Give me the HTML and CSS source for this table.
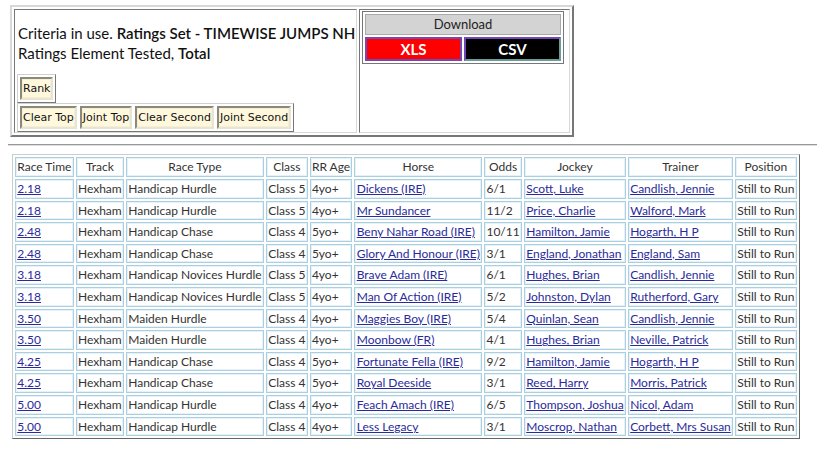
FILE: index.html
```html
<!DOCTYPE html>
<html>
<head>
<meta charset="utf-8">
<link rel="stylesheet" href="styles.css">
</head>
<body>
<div class="top">
  <table class="criteria">
    <tr>
      <td class="crit-left">
        <div class="crit-text">Criteria in use. <b>Ratings Set - TIMEWISE JUMPS NH</b><br>Ratings Element Tested, <b>Total</b></div>
        <div class="rank-box"><span class="btn">Rank</span></div>
        <div class="btn-bar"><span class="btn">Clear Top</span><span class="btn">Joint Top</span><span class="btn">Clear Second</span><span class="btn">Joint Second</span></div>
      </td>
      <td class="crit-right">
        <table class="download">
          <tr><td colspan="2" class="dl-head">Download</td></tr>
          <tr><td class="dl-xls">XLS</td><td class="dl-csv">CSV</td></tr>
        </table>
      </td>
    </tr>
  </table>
</div>
<hr class="rule">
<table class="races">
  <thead>
    <tr><th>Race Time</th><th>Track</th><th>Race Type</th><th>Class</th><th>RR Age</th><th>Horse</th><th>Odds</th><th>Jockey</th><th>Trainer</th><th>Position</th></tr>
  </thead>
  <tbody>
    <tr><td><a href="#">2.18</a></td><td>Hexham</td><td>Handicap Hurdle</td><td>Class 5</td><td>4yo+</td><td><a href="#">Dickens (IRE)</a></td><td>6/1</td><td><a href="#">Scott, Luke</a></td><td><a href="#">Candlish, Jennie</a></td><td>Still to Run</td></tr>
    <tr><td><a href="#">2.18</a></td><td>Hexham</td><td>Handicap Hurdle</td><td>Class 5</td><td>4yo+</td><td><a href="#">Mr Sundancer</a></td><td>11/2</td><td><a href="#">Price, Charlie</a></td><td><a href="#">Walford, Mark</a></td><td>Still to Run</td></tr>
    <tr><td><a href="#">2.48</a></td><td>Hexham</td><td>Handicap Chase</td><td>Class 4</td><td>5yo+</td><td><a href="#">Beny Nahar Road (IRE)</a></td><td>10/11</td><td><a href="#">Hamilton, Jamie</a></td><td><a href="#">Hogarth, H P</a></td><td>Still to Run</td></tr>
    <tr><td><a href="#">2.48</a></td><td>Hexham</td><td>Handicap Chase</td><td>Class 4</td><td>5yo+</td><td><a href="#">Glory And Honour (IRE)</a></td><td>3/1</td><td><a href="#">England, Jonathan</a></td><td><a href="#">England, Sam</a></td><td>Still to Run</td></tr>
    <tr><td><a href="#">3.18</a></td><td>Hexham</td><td>Handicap Novices Hurdle</td><td>Class 5</td><td>4yo+</td><td><a href="#">Brave Adam (IRE)</a></td><td>6/1</td><td><a href="#">Hughes, Brian</a></td><td><a href="#">Candlish, Jennie</a></td><td>Still to Run</td></tr>
    <tr><td><a href="#">3.18</a></td><td>Hexham</td><td>Handicap Novices Hurdle</td><td>Class 5</td><td>4yo+</td><td><a href="#">Man Of Action (IRE)</a></td><td>5/2</td><td><a href="#">Johnston, Dylan</a></td><td><a href="#">Rutherford, Gary</a></td><td>Still to Run</td></tr>
    <tr><td><a href="#">3.50</a></td><td>Hexham</td><td>Maiden Hurdle</td><td>Class 4</td><td>4yo+</td><td><a href="#">Maggies Boy (IRE)</a></td><td>5/4</td><td><a href="#">Quinlan, Sean</a></td><td><a href="#">Candlish, Jennie</a></td><td>Still to Run</td></tr>
    <tr><td><a href="#">3.50</a></td><td>Hexham</td><td>Maiden Hurdle</td><td>Class 4</td><td>4yo+</td><td><a href="#">Moonbow (FR)</a></td><td>4/1</td><td><a href="#">Hughes, Brian</a></td><td><a href="#">Neville, Patrick</a></td><td>Still to Run</td></tr>
    <tr><td><a href="#">4.25</a></td><td>Hexham</td><td>Handicap Chase</td><td>Class 4</td><td>5yo+</td><td><a href="#">Fortunate Fella (IRE)</a></td><td>9/2</td><td><a href="#">Hamilton, Jamie</a></td><td><a href="#">Hogarth, H P</a></td><td>Still to Run</td></tr>
    <tr><td><a href="#">4.25</a></td><td>Hexham</td><td>Handicap Chase</td><td>Class 4</td><td>5yo+</td><td><a href="#">Royal Deeside</a></td><td>3/1</td><td><a href="#">Reed, Harry</a></td><td><a href="#">Morris, Patrick</a></td><td>Still to Run</td></tr>
    <tr><td><a href="#">5.00</a></td><td>Hexham</td><td>Handicap Hurdle</td><td>Class 4</td><td>4yo+</td><td><a href="#">Feach Amach (IRE)</a></td><td>6/5</td><td><a href="#">Thompson, Joshua</a></td><td><a href="#">Nicol, Adam</a></td><td>Still to Run</td></tr>
    <tr><td><a href="#">5.00</a></td><td>Hexham</td><td>Handicap Hurdle</td><td>Class 4</td><td>4yo+</td><td><a href="#">Less Legacy</a></td><td>3/1</td><td><a href="#">Moscrop, Nathan</a></td><td><a href="#">Corbett, Mrs Susan</a></td><td>Still to Run</td></tr>
  </tbody>
</table>
</body>
</html>
```
FILE: styles.css
```css
html, body {
  margin: 0;
  padding: 0;
  background: #fff;
  color: #222;
  font-family: Lato, "Open Sans", sans-serif;
}
body {
  padding: 5px 0 0 10px;
}
.criteria {
  border-collapse: separate;
  border-spacing: 2px;
  border: 2px solid;
  border-color: #d8d8d8 #777 #777 #d8d8d8;
}
.criteria > tbody > tr > td,
.criteria > tr > td {
  border: 1px solid;
  border-color: #777 #d8d8d8 #d8d8d8 #777;
  padding: 0;
  vertical-align: top;
}
.crit-left {
  width: 341px;
  height: 121px;
}
.crit-text {
  font-size: 15px;
  line-height: 20px;
  padding: 13px 0 0 3px;
  white-space: nowrap;
  color: #111;
}
.crit-text b {
  font-weight: 600;
}
.rank-box {
  display: inline-flex;
  margin: 11px 0 0 2px;
  padding: 2px;
  border: 1px solid;
  border-color: #d0d0d0 #777 #777 #d0d0d0;
}
.btn-bar {
  display: flex;
  gap: 3px;
  width: max-content;
  margin: 0 0 0 2px;
  padding: 2px;
  border: 1px solid;
  border-color: #d0d0d0 #777 #777 #d0d0d0;
}
.btn {
  display: inline-block;
  font-family: "DejaVu Sans", sans-serif;
  font-size: 11px;
  line-height: 19px;
  padding: 0 1px;
  background: #fff8dc;
  color: #111;
  border: 2px solid;
  border-color: #8a8a7a #e8e4d0 #e8e4d0 #8a8a7a;
  box-shadow: inset 0 0 0 1px #f4efd8;
}
.crit-right {
  width: 209px;
}
.download {
  border-collapse: separate;
  border-spacing: 2px;
  margin: 1px 0 0 2px;
  width: 202px;
  border: 1px solid #777;
}
.download td {
  text-align: center;
  padding: 0;
}
.dl-head {
  background: #d3d3d3;
  font-size: 13px;
  line-height: 19px;
  color: #222;
  border: 1px solid #aaa;
}
.dl-xls, .dl-csv {
  font-size: 15px;
  font-weight: bold;
  line-height: 20px;
  color: #fff;
  width: 50%;
}
.dl-xls {
  background: #ff0000;
  border: 2px solid #7446b8;
}
.dl-csv {
  background: #000;
  border: 2px solid;
  border-color: #7446b8 #6a9c9c #6a9c9c #7446b8;
}
.rule {
  margin: 7px 0 0 -2px;
  border: 0;
  border-top: 1px solid #999;
  border-bottom: 1px solid #ddd;
  height: 0;
}
.races {
  margin: 8px 0 0 2px;
  border-collapse: separate;
  border-spacing: 2px;
  border: 1px solid;
  border-color: #ccc #666 #666 #ccc;
  font-size: 12px;
  color: #333;
}
.races th, .races td {
  border: 1px solid #a9cfe0;
  box-shadow: inset 0 0 0 1px #e6f2f8;
  padding: 0 1.25px;
  line-height: 17.6px;
  white-space: nowrap;
  text-align: left;
}
.races th {
  font-weight: normal;
  text-align: center;
  line-height: 18px;
}
.races a {
  color: #2a2a9c;
}
```
